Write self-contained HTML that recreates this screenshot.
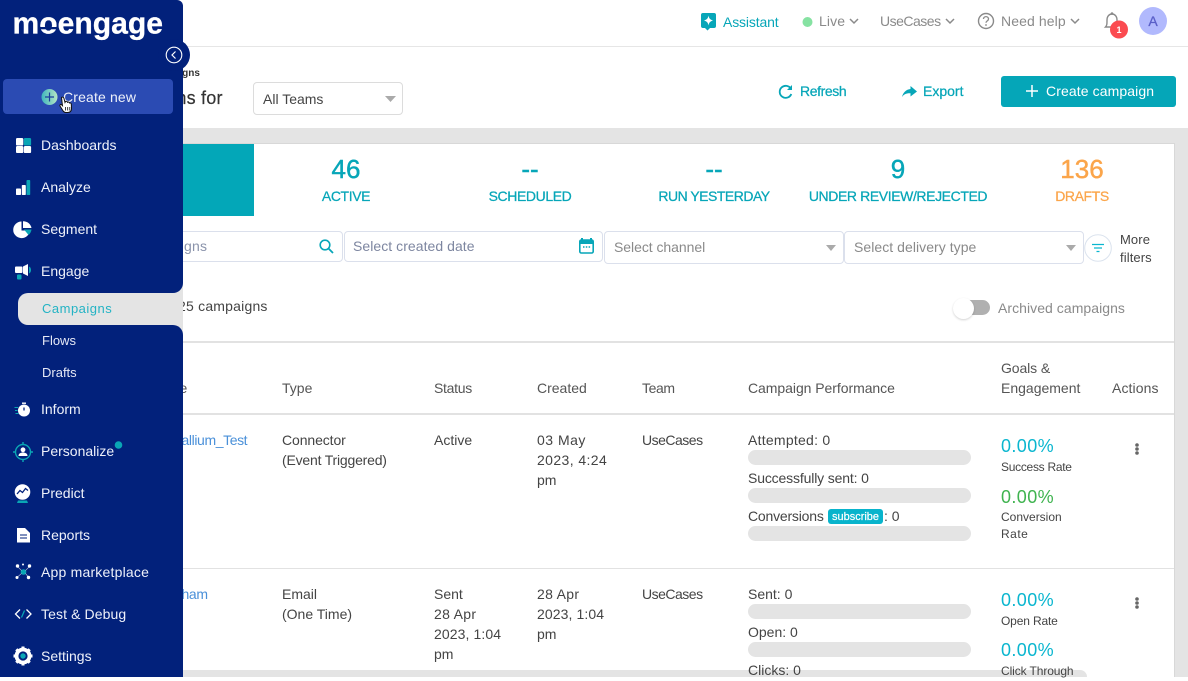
<!DOCTYPE html>
<html><head><meta charset="utf-8"><title>Campaigns</title>
<style>
*{box-sizing:border-box}
html,body{margin:0;padding:0}
body{width:1188px;height:677px;position:relative;overflow:hidden;background:#fff;font-family:"Liberation Sans",sans-serif;font-size:14px;color:#444}
.a{position:absolute}
.t{position:absolute;white-space:nowrap;line-height:20px;height:20px}
svg{position:absolute;overflow:visible}
.teal{color:#07a6b8}
.nav{color:#eef1fa}
.sub{color:#e6e9f5;font-size:13px}
.h{color:#555}
.top{color:#8a8a8a}
.st{color:#07a6b8;letter-spacing:-.4px;width:240px;text-align:center;-webkit-text-stroke:.25px #07a6b8}
.num{color:#07a6b8;font-size:26px;width:120px;text-align:center;line-height:30px;height:30px;-webkit-text-stroke:.45px #07a6b8}
.bar{position:absolute;left:748px;width:223px;height:15px;border-radius:8px;background:#e4e4e4}
.pc{font-size:18px;color:#0ab6cf;letter-spacing:.4px;left:1001px}
.sm{font-size:12px;color:#444;left:1001px}
.box{position:absolute;background:#fff;border:1px solid #dbe0ec;border-radius:4px}
.ph{color:#8a8a8a}
.link{color:#4a90d9}
</style></head><body>

<!-- header -->
<div class="a" style="left:0;top:46px;width:1188px;height:1px;background:#e6e6e6"></div>
<svg style="left:0;top:0" width="1188" height="130">
  <path d="M703 13h11a2 2 0 0 1 2 2v11a2 2 0 0 1-2 2h-4l-2.500 2.500-2.500-2.500h-2a2 2 0 0 1-2-2v-11a2 2 0 0 1 2-2z" fill="#07a6b8"/>
  <path d="M708.500 15.500c.5 3 1.500 4 4.500 5-3 1-4 2-4.500 5-.5-3-1.500-4-4.500-5 3-1 4-2 4.500-5z" fill="#fff"/>
  <circle cx="807.500" cy="22" r="5" fill="#86e2a2"/>
  <path d="M850 19l4 4 4-4M946 19l4 4 4-4M1071 19l4 4 4-4" fill="none" stroke="#8a8a8a" stroke-width="1.500"/>
  <circle cx="986" cy="21" r="7.500" fill="none" stroke="#8a8a8a" stroke-width="1.400"/>
  <path d="M983.500 19c0-3.200 5-3.200 5 0 0 2-2.500 1.800-2.500 3.800" fill="none" stroke="#8a8a8a" stroke-width="1.300"/>
  <circle cx="986" cy="25" r=".9" fill="#8a8a8a"/>
  <path d="M1105.500 27c1.500-1.500 1.500-3 1.500-7 0-3.500 2-6 5-6s5 2.500 5 6c0 4 0 5.500 1.500 7z" fill="none" stroke="#8a8a8a" stroke-width="1.400"/>
  <circle cx="1112" cy="13.500" r="1.300" fill="#8a8a8a"/>
  <circle cx="1119" cy="29.500" r="9" fill="#fb4b50"/>
  <circle cx="1153" cy="21" r="14" fill="#b1b9fd"/>
  <!-- refresh -->
  <path d="M791 89a6 6 0 1 0 .3 5" fill="none" stroke="#07a6b8" stroke-width="1.800"/>
  <path d="M792 85v5h-5z" fill="#07a6b8"/>
  <!-- export -->
  <path d="M917 91.500l-6.500-5.500v3c-5 .5-7.500 4-8.500 8 2-3 5-4 8.500-3.700v3.200z" fill="#07a6b8"/>
</svg>
<div class="t teal" style="left:723px;top:12px;letter-spacing:-.15px">Assistant</div>
<div class="t top" style="left:819px;top:11px;letter-spacing:.1px">Live</div>
<div class="t top" style="left:880px;top:11px;letter-spacing:-.5px">UseCases</div>
<div class="t top" style="left:1001px;top:11px;letter-spacing:.1px">Need help</div>
<div class="t" style="left:1115px;top:20px;font-size:9px;font-weight:bold;color:#fff;width:8px;text-align:center">1</div>
<div class="t" style="left:1143px;top:11px;width:20px;text-align:center;color:#5a5fc8;font-size:14px;-webkit-text-stroke:.3px #5a5fc8">A</div>

<div class="t" style="left:146px;top:64px;font-size:10px;color:#333;font-weight:bold">Campaigns</div>
<div class="t" style="left:103px;top:88px;font-size:18px;color:#333;letter-spacing:.2px;-webkit-text-stroke:.2px #333">Campaigns for</div>

<div class="box" style="left:253px;top:82px;width:150px;height:33px;border-color:#dcdcdc"></div>
<div class="t" style="left:263px;top:89px;color:#444">All Teams</div>
<svg style="left:385px;top:96px" width="11" height="6"><path d="M0 0h11l-5.500 6z" fill="#aaa"/></svg>

<div class="t teal" style="left:800px;top:81px;letter-spacing:-.4px;-webkit-text-stroke:.25px #07a6b8">Refresh</div>
<div class="t teal" style="left:923px;top:81px;-webkit-text-stroke:.25px #07a6b8">Export</div>
<div class="a" style="left:1001px;top:76px;width:175px;height:31px;background:#05a6b8;border-radius:3px"></div>
<svg style="left:1026px;top:85px" width="13" height="13"><path d="M6 0v12M0 6h12" stroke="#fff" stroke-width="1.500"/></svg>
<div class="t" style="left:1046px;top:81px;color:#fff;letter-spacing:.1px">Create campaign</div>

<!-- grey page bg -->
<div class="a" style="left:0;top:128px;width:1188px;height:549px;background:#e4e4e4"></div>
<!-- card -->
<div class="a" style="left:183px;top:143px;width:992px;height:534px;background:#fff;border-top:1px solid #d8d8d8;border-right:1px solid #d8d8d8"></div>
<div class="a" style="left:183px;top:144px;width:71px;height:72px;background:#03a7b8"></div>

<div class="t num" style="left:286px;top:154px">46</div>
<div class="t num" style="left:470px;top:154px">--</div>
<div class="t num" style="left:654px;top:154px">--</div>
<div class="t num" style="left:838px;top:154px">9</div>
<div class="t num" style="left:1022px;top:154px;color:#fba54a;-webkit-text-stroke:.45px #fba54a">136</div>
<div class="t st" style="left:226px;top:186px">ACTIVE</div>
<div class="t st" style="left:410px;top:186px">SCHEDULED</div>
<div class="t st" style="left:594px;top:186px;letter-spacing:-.5px">RUN YESTERDAY</div>
<div class="t st" style="left:778px;top:186px">UNDER REVIEW/REJECTED</div>
<div class="t st" style="left:962px;top:186px;color:#fba54a;-webkit-text-stroke:.25px #fba54a">DRAFTS</div>

<!-- filters -->
<div class="box" style="left:120px;top:231px;width:223px;height:31px"></div>
<div class="t" style="left:88px;top:236px;color:#8a93ab;letter-spacing:.2px">Search campaigns</div>
<svg style="left:319px;top:239px" width="15" height="15"><circle cx="6" cy="6" r="4.800" fill="none" stroke="#07a6b8" stroke-width="1.600"/><path d="M9.500 9.500l4.500 4.500" stroke="#07a6b8" stroke-width="1.800"/></svg>
<div class="box" style="left:344px;top:231px;width:259px;height:31px"></div>
<div class="t" style="left:353px;top:236px;color:#7d86a0;letter-spacing:.05px">Select created date</div>
<svg style="left:579px;top:238px" width="15" height="16"><path d="M3 0v3M12 0v3" stroke="#07a6b8" stroke-width="2"/><rect x=".8" y="2" width="13.400" height="13" rx="1.500" fill="none" stroke="#07a6b8" stroke-width="1.600"/><rect x="1" y="2" width="13" height="4" fill="#07a6b8"/><path d="M4 9h1.500M6.800 9h1.500M9.600 9h1.500" stroke="#07a6b8" stroke-width="1.400"/></svg>
<div class="box" style="left:604px;top:231px;width:240px;height:33px"></div>
<div class="t ph" style="left:614px;top:237px;letter-spacing:-.05px">Select channel</div>
<svg style="left:826px;top:245px" width="10" height="6"><path d="M0 0h10l-5 6z" fill="#aaa"/></svg>
<div class="box" style="left:844px;top:231px;width:240px;height:33px"></div>
<div class="t ph" style="left:854px;top:237px;letter-spacing:.05px">Select delivery type</div>
<svg style="left:1066px;top:245px" width="10" height="6"><path d="M0 0h10l-5 6z" fill="#aaa"/></svg>
<svg style="left:1084px;top:234px" width="28" height="28"><circle cx="14" cy="14" r="13.300" fill="#fff" stroke="#dbe3ee"/><path d="M8 10.500h12M10 14h8M12.500 17.500h3" stroke="#0ab6cf" stroke-width="1.300"/></svg>
<div class="t" style="left:1120px;top:230px;font-size:13px;color:#444;letter-spacing:.1px">More</div>
<div class="t" style="left:1120px;top:248px;font-size:13px;color:#444;letter-spacing:.1px">filters</div>

<div class="t" style="left:121px;top:296px;color:#444;letter-spacing:.2px">1-25 of 125 campaigns</div>
<div class="a" style="left:966px;top:299.500px;width:24px;height:15px;background:#b0b0b0;border-radius:0 8px 8px 0"></div>
<div class="a" style="left:953px;top:298px;width:21px;height:21px;border-radius:50%;background:#fff;box-shadow:0 1px 2px rgba(0,0,0,.18)"></div>
<div class="t" style="left:998px;top:298px;color:#8a8a8a;letter-spacing:.05px">Archived campaigns</div>

<!-- table -->
<div class="a" style="left:183px;top:341px;width:991px;height:2px;background:#e2e2e2"></div>
<div class="a" style="left:183px;top:413px;width:991px;height:2px;background:#e2e2e2"></div>
<div class="a" style="left:183px;top:568px;width:991px;height:1px;background:#e2e2e2"></div>

<div class="t h" style="left:150px;top:378px">Name</div>
<div class="t h" style="left:282px;top:378px">Type</div>
<div class="t h" style="left:434px;top:378px;letter-spacing:-.3px">Status</div>
<div class="t h" style="left:537px;top:378px">Created</div>
<div class="t h" style="left:642px;top:378px;letter-spacing:-.4px">Team</div>
<div class="t h" style="left:748px;top:378px;letter-spacing:-.05px">Campaign Performance</div>
<div class="t h" style="left:1001px;top:358px;letter-spacing:-.1px">Goals &amp;</div>
<div class="t h" style="left:1001px;top:378px">Engagement</div>
<div class="t h" style="left:1112px;top:378px;letter-spacing:.1px">Actions</div>

<div class="t link" style="left:166px;top:430px;letter-spacing:-.4px">Thallium_Test</div>
<div class="t" style="left:282px;top:430px;letter-spacing:-.1px">Connector</div>
<div class="t" style="left:282px;top:450px;letter-spacing:-.2px">(Event Triggered)</div>
<div class="t" style="left:434px;top:430px">Active</div>
<div class="t" style="left:537px;top:430px;letter-spacing:.5px">03 May</div>
<div class="t" style="left:537px;top:450px;letter-spacing:.4px">2023, 4:24</div>
<div class="t" style="left:537px;top:470px">pm</div>
<div class="t" style="left:642px;top:430px;letter-spacing:-.5px">UseCases</div>

<div class="t" style="left:748px;top:430px;letter-spacing:.25px">Attempted: 0</div>
<div class="bar" style="top:450px"></div>
<div class="t" style="left:748px;top:468px;letter-spacing:-.15px">Successfully sent: 0</div>
<div class="bar" style="top:488px"></div>
<div class="t" style="left:748px;top:506px;letter-spacing:-.2px">Conversions</div>
<div class="a" style="left:828px;top:509px;width:55px;height:15px;background:#08b4cc;border-radius:3px;color:#fff;font-size:11px;line-height:17px;text-align:center;-webkit-text-stroke:.2px #fff">subscribe</div>
<div class="t" style="left:884px;top:506px">: 0</div>
<div class="bar" style="top:526px"></div>

<div class="t pc" style="top:436px">0.00%</div>
<div class="t sm" style="top:457px;letter-spacing:-.28px">Success Rate</div>
<div class="t pc" style="top:487px;color:#3fb34f">0.00%</div>
<div class="t sm" style="top:507px">Conversion</div>
<div class="t sm" style="top:524px;letter-spacing:.5px">Rate</div>
<svg style="left:1134px;top:443px" width="6" height="12"><circle cx="3" cy="2" r="1.800" fill="#666"/><circle cx="3" cy="6" r="1.800" fill="#666"/><circle cx="3" cy="10" r="1.800" fill="#666"/></svg>

<!-- scrollbar strip -->
<div class="a" style="left:183px;top:670px;width:904px;height:7px;background:#e4e4e4;border-radius:0 8px 0 0"></div>

<div class="t link" style="left:159px;top:584px;letter-spacing:-.3px">Graham</div>
<div class="t" style="left:282px;top:584px">Email</div>
<div class="t" style="left:282px;top:604px">(One Time)</div>
<div class="t" style="left:434px;top:584px">Sent</div>
<div class="t" style="left:434px;top:604px;letter-spacing:.3px">28 Apr</div>
<div class="t" style="left:434px;top:624px;letter-spacing:.1px">2023, 1:04</div>
<div class="t" style="left:434px;top:644px">pm</div>
<div class="t" style="left:537px;top:584px;letter-spacing:.3px">28 Apr</div>
<div class="t" style="left:537px;top:604px;letter-spacing:.1px">2023, 1:04</div>
<div class="t" style="left:537px;top:624px">pm</div>
<div class="t" style="left:642px;top:584px;letter-spacing:-.5px">UseCases</div>

<div class="t" style="left:748px;top:584px">Sent: 0</div>
<div class="bar" style="top:604px"></div>
<div class="t" style="left:748px;top:622px">Open: 0</div>
<div class="bar" style="top:642px"></div>
<div class="t" style="left:748px;top:660px">Clicks: 0</div>

<div class="t pc" style="top:590px">0.00%</div>
<div class="t sm" style="top:611px;letter-spacing:-.15px">Open Rate</div>
<div class="t pc" style="top:640px">0.00%</div>
<div class="t sm" style="top:661px;letter-spacing:-.1px">Click Through</div>
<svg style="left:1134px;top:597px" width="6" height="12"><circle cx="3" cy="2" r="1.800" fill="#666"/><circle cx="3" cy="6" r="1.800" fill="#666"/><circle cx="3" cy="10" r="1.800" fill="#666"/></svg>

<!-- sidebar -->
<div class="a" style="left:0;top:0;width:183px;height:677px;background:#02217b;border-radius:0 6px 0 0"></div>
<div class="a" style="left:158px;top:39px;width:32px;height:32px;border-radius:50%;background:#02217b"></div>
<svg style="left:0;top:0" width="190" height="677">
  <text x="12.500" y="33.500" font-family="Liberation Sans" font-weight="bold" font-size="31" fill="#fff" stroke="#fff" stroke-width=".3" textLength="150.500" lengthAdjust="spacingAndGlyphs">moengage</text>
  <rect x="40" y="27" width="17" height="2.300" fill="#02217b"/>
  <circle cx="174" cy="55" r="7.800" fill="none" stroke="#fff" stroke-width="1.100"/>
  <path d="M175.500 51.500L172 55l3.500 3.500" fill="none" stroke="#fff" stroke-width="1.200"/>
</svg>
<div class="a" style="left:3px;top:79px;width:170px;height:35px;background:#2b4bb3;border-radius:4px"></div>
<svg style="left:0;top:0" width="190" height="130">
  <defs><linearGradient id="g" x1="0" x2="1"><stop offset="0" stop-color="#3fb6bd"/><stop offset="1" stop-color="#b6e6c4"/></linearGradient></defs>
  <circle cx="49.500" cy="97" r="8" fill="url(#g)"/>
  <path d="M49.500 92.500v9M45 97h9" stroke="#1c3f9e" stroke-width="1.200"/>
</svg>
<div class="t" style="left:63px;top:87px;color:#eef1fa;letter-spacing:.15px">Create new</div>
<svg style="left:58px;top:96px" width="16" height="19">
  <path d="M3.500 1.500c1-.8 2.200-.3 2.500 1l1 4 .5-1c1-.5 1.800 0 2 .8.800-.6 1.700-.2 2 .7.800-.3 1.700.2 1.800 1.200l.2 4.300c0 2.500-1.500 4-4 4H8c-1.800 0-2.700-1-3.500-2.500L2 10c-.5-1 .5-2 1.500-1.300l1 1z" fill="#fff" stroke="#111" stroke-width="1"/>
  <path d="M7.500 11v3.500M9.700 11v3.500M11.800 11v3.500" stroke="#111" stroke-width=".8"/>
</svg>

<!-- nav icons -->
<svg style="left:0;top:130px" width="60" height="547">
  <!-- dashboards -->
  <rect x="16" y="8" width="7.300" height="7.500" rx="1.300" fill="#fff"/><rect x="23.800" y="8" width="7.300" height="7.500" rx="1.300" fill="#0aa6b5"/>
  <rect x="16" y="16" width="7.300" height="7" rx="1.300" fill="#fff"/><rect x="23.800" y="16" width="7.300" height="7" rx="1.300" fill="#fff"/>
  <!-- analyze -->
  <rect x="16" y="58.500" width="5" height="6.500" rx=".8" fill="#fff"/><rect x="21.800" y="55" width="4" height="10" rx=".8" fill="#fff"/><rect x="26.500" y="50" width="3.700" height="15" rx=".8" fill="#0aa6b5"/>
  <!-- segment -->
  <path d="M21.500 91.500a8.300 8.300 0 1 0 8.300 9H21.500z" fill="#fff"/>
  <path d="M23 91.200a8.500 8.500 0 0 1 8.500 6.800H23z" fill="#fff"/>
  <path d="M24 99.500h7.500a8.500 8.500 0 0 1-3 5.500z" fill="#0aa6b5"/>
  <!-- engage -->
  <rect x="15" y="136.500" width="7.500" height="6.500" rx="1" fill="#fff"/>
  <path d="M23 136.500l5-2.500v12l-5-2.500z" fill="#fff"/><path d="M29 136.500c1.500.8 2 2 2 3.500s-.5 2.700-2 3.500z" fill="#0aa6b5"/>
  <rect x="17" y="144.500" width="4.500" height="5" rx="1" fill="#0aa6b5"/>
  <!-- inform -->
  <circle cx="24" cy="280.500" r="6" fill="#fff"/><rect x="22" y="272.500" width="4" height="1.400" fill="#fff"/>
  <path d="M24 277.500v3" stroke="#02217b" stroke-width="1.300"/>
  <path d="M14.500 277.500h3.500M15 280.500h2.500M15.500 283.500h3" stroke="#0aa6b5" stroke-width="1"/>
  <!-- personalize -->
  <circle cx="23" cy="322" r="7.500" fill="none" stroke="#0aa6b5" stroke-width="1.400"/>
  <path d="M23 312v3M23 329v3M13 322h3M30 322h3" stroke="#0aa6b5" stroke-width="1.400"/>
  <circle cx="23" cy="319.800" r="2.400" fill="#fff"/><path d="M18.500 326c0-2.500 2-3.500 4.500-3.500s4.500 1 4.500 3.500z" fill="#fff"/>
  <circle cx="118.500" cy="315" r="3.800" fill="#0aa6b5"/>
  <!-- predict -->
  <circle cx="22.500" cy="362" r="7.800" fill="#fff"/>
  <path d="M17 364l3-3.500 2.500 2 3-4 2.500 2" fill="none" stroke="#02217b" stroke-width="1.300"/>
  <path d="M18 370.500h9l1 2.500H17z" fill="#0aa6b5"/>
  <!-- reports -->
  <path d="M17 398h8l5 5v9.500H17z" fill="#fff"/><path d="M20 405h7M20 408h7" stroke="#02217b" stroke-width="1"/>
  <!-- marketplace -->
  <circle cx="23.500" cy="442" r="2.800" fill="#0aa6b5"/>
  <path d="M21.500 440.500L18 437M25.500 440.500l3.500-3.500M21.500 443.500l-3.500 3M25.500 443.500l2.500 3" stroke="#fff" stroke-width=".6" opacity=".7"/>
  <circle cx="17.500" cy="436" r="1.700" fill="#fff"/><circle cx="29.500" cy="436" r="1.700" fill="#fff"/><circle cx="17" cy="447.500" r="1.500" fill="#fff"/><circle cx="28.500" cy="447.500" r="1.700" fill="#fff"/><circle cx="23" cy="434.500" r="1" fill="#fff"/>
  <!-- test -->
  <path d="M20 479.500l-4.500 4.500 4.500 4.500M26.500 479.500l4.500 4.500-4.500 4.500" fill="none" stroke="#fff" stroke-width="1.300"/>
  <path d="M24.500 480.500l-3 7" stroke="#0aa6b5" stroke-width="1.300"/>
  <!-- settings -->
  <circle cx="23" cy="526" r="6.500" fill="none" stroke="#fff" stroke-width="3.800"/>
  <circle cx="23" cy="526" r="2.700" fill="#0aa6b5"/>
  <path d="M23 516.500v3M23 532.500v3M13.500 526h3M29.500 526h3M16.300 519.300l2.100 2.100M27.600 530.600l2.100 2.100M16.300 532.700l2.100-2.100M27.600 521.400l2.100-2.100" stroke="#fff" stroke-width="3"/>
</svg>

<div class="t nav" style="left:41px;top:135px">Dashboards</div>
<div class="t nav" style="left:41px;top:177px">Analyze</div>
<div class="t nav" style="left:41px;top:219px">Segment</div>
<div class="t nav" style="left:41px;top:261px">Engage</div>

<!-- active pill -->
<div class="a" style="left:173px;top:283px;width:10px;height:10px;background:#e4e4e4"></div>
<div class="a" style="left:173px;top:283px;width:10px;height:10px;background:#02217b;border-radius:0 0 10px 0"></div>
<div class="a" style="left:173px;top:325px;width:10px;height:10px;background:#e4e4e4"></div>
<div class="a" style="left:173px;top:325px;width:10px;height:10px;background:#02217b;border-radius:0 10px 0 0"></div>
<div class="a" style="left:18px;top:293px;width:165px;height:32px;background:#e4e4e4;border-radius:10px 0 0 10px"></div>
<div class="t" style="left:42px;top:299px;font-size:13px;color:#23b3c4;letter-spacing:.5px">Campaigns</div>
<div class="t sub" style="left:42px;top:331px">Flows</div>
<div class="t sub" style="left:42px;top:363px">Drafts</div>

<div class="t nav" style="left:41px;top:399px">Inform</div>
<div class="t nav" style="left:41px;top:441px">Personalize</div>
<div class="t nav" style="left:41px;top:483px">Predict</div>
<div class="t nav" style="left:41px;top:525px">Reports</div>
<div class="t nav" style="left:41px;top:562px;letter-spacing:.2px">App marketplace</div>
<div class="t nav" style="left:41px;top:604px;letter-spacing:.1px">Test &amp; Debug</div>
<div class="t nav" style="left:41px;top:646px">Settings</div>
</body></html>
